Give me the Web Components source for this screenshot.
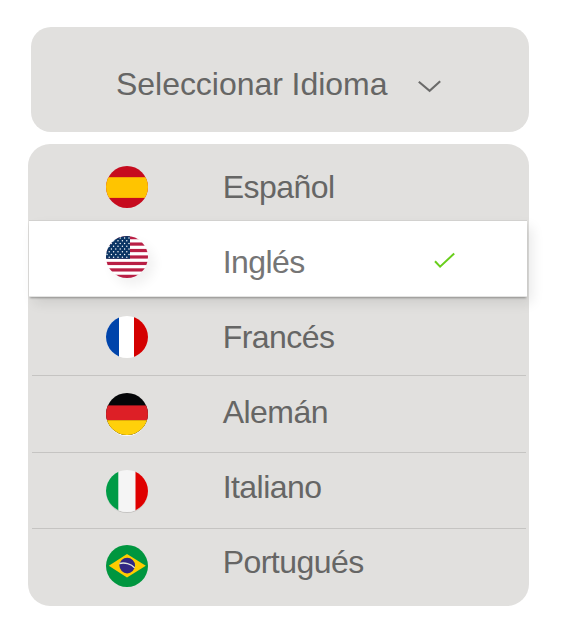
<!DOCTYPE html>
<html lang="es">
<head>
<meta charset="utf-8">
<title>Seleccionar Idioma</title>
<style>
    body {
        margin: 0;
        background: #fff;
        color: #666665;
        font-family: "Liberation Sans", Arial, sans-serif;
        font-size: 32px;
        line-height: 36px;
    }
</style>
</head>
<body>
<language-picker>
    <picker-header slot="header">Seleccionar Idioma</picker-header>
    <language-option flag="es" style="--height: 77px; --flag-top: 22px; --label-top: 25px">Español</language-option>
    <language-option flag="us" selected style="--height: 76px; --flag-top: 15.5px; --label-top: 23px">Inglés</language-option>
    <language-option flag="fr" style="--height: 78px; --flag-top: 19px; --label-top: 22px">Francés</language-option>
    <language-option flag="de" divided style="--height: 77px; --flag-top: 18px; --label-top: 19px">Alemán</language-option>
    <language-option flag="it" divided style="--height: 76px; --flag-top: 18.5px; --label-top: 17px">Italiano</language-option>
    <language-option flag="br" divided style="--height: 78px; --flag-top: 17px; --label-top: 16px">Portugués</language-option>
</language-picker>

<script>
// white stars of the US canton, in staggered rows
function stars() {
    let dots = '';
    for (let row = 0; row < 8; row++) {
        for (let col = 0; col < 6; col++) {
            const x = 1 + col * 4.4 + (row % 2) * 2.2;
            dots += `<circle cx="${x}" cy="${2 + row * 2.75}" r=".72"/>`;
        }
    }
    return `<g fill="#fff">${dots}</g>`;
}

function stripes() {
    let bars = '';
    for (let i = 0; i < 7; i++) {
        bars += `<rect y="${i * 6.46}" width="42" height="3.23"/>`;
    }
    return `<g fill="#b91f45">${bars}</g>`;
}

const flags = {
    es: `<rect width="42" height="42" fill="#c60b1e"/>
         <rect y="11.2" width="42" height="20.7" fill="#ffc400"/>`,
    us: `<rect width="42" height="42" fill="#fff"/>${stripes()}
         <rect width="24" height="22.8" fill="#0b3564"/>
         <g clip-path="url(#canton)">${stars()}</g>`,
    fr: `<rect width="42" height="42" fill="#fff"/>
         <rect width="13" height="42" fill="#0044aa"/>
         <rect x="28" width="14" height="42" fill="#d40000"/>`,
    de: `<rect width="42" height="42" fill="#050608"/>
         <rect y="12.4" width="42" height="15" fill="#dd1f26"/>
         <rect y="27.2" width="42" height="15" fill="#ffd00a"/>`,
    it: `<rect width="42" height="42" fill="#f5f5f5"/>
         <rect width="12.3" height="42" fill="#009b46"/>
         <rect x="29.5" width="13" height="42" fill="#df0000"/>`,
    br: `<rect width="42" height="42" fill="#00963f"/>
         <path d="M2.8 20.8 21 8.9l18.8 11.9L21 32.4z" fill="#ffcc00"/>
         <circle cx="21.2" cy="20.6" r="7.8" fill="#312783"/>
         <path d="M13.4 18.5c5-1.4 11.8.2 15.2 4.4" fill="none" stroke="#dfe5df" stroke-width="1.3"/>`
};

class FlagIcon extends HTMLElement {
    constructor() {
        super();
        this.attachShadow({ mode: 'open' });
    }

    connectedCallback() {
        const country = this.getAttribute('country');
        this.shadowRoot.innerHTML = `
        <style>
            :host { display: block; width: 42px; height: 42px; border-radius: 50%; }
            :host([country="us"]) { box-shadow: 6px 7px 12px rgba(0, 0, 0, .06); }
            :host([country="de"]) { box-shadow: 0 1px 0 rgba(255, 255, 255, .75); }
            :host([country="it"]) { box-shadow: 0 1px 0 rgba(0, 0, 0, .12); }
            svg { display: block; }
        </style>
        <svg width="42" height="42" viewBox="0 0 42 42">
            <clipPath id="disc"><circle cx="21" cy="21" r="21"/></clipPath>
            <clipPath id="canton"><rect width="24" height="22.8"/></clipPath>
            <g clip-path="url(#disc)">${flags[country] || ''}</g>
        </svg>`;
    }
}

class PickerHeader extends HTMLElement {
    constructor() {
        super();
        this.attachShadow({ mode: 'open' });
        this.shadowRoot.innerHTML = `
        <style>
            :host {
                display: flex;
                box-sizing: border-box;
                width: 498px;
                height: 104.5px;
                margin-left: 2.5px;
                padding: 38.7px 0 0 85.5px;
                border-radius: 20px;
                background: #e1e0de;
                letter-spacing: -.04px;
            }
            svg { margin: 14px 0 0 30.4px; }
        </style>
        <span><slot></slot></span>
        <svg width="24" height="14" viewBox="0 0 24 14" fill="none" stroke="#6b6b6a" stroke-width="2.1">
            <path d="M.8 1.8 11.6 10.9 22.2 1.3"/>
        </svg>`;
    }
}

class LanguageOption extends HTMLElement {
    constructor() {
        super();
        this.attachShadow({ mode: 'open' });
    }

    connectedCallback() {
        const check = this.hasAttribute('selected')
            ? `<svg width="22" height="18" viewBox="0 0 22 18" fill="none" stroke="#69ce1c" stroke-width="2">
                   <path d="M1 9.3 6.1 14.7 20.2 1.5"/>
               </svg>`
            : '';

        this.shadowRoot.innerHTML = `
        <style>
            :host {
                display: grid;
                grid-template-columns: 42px 212px 22px;
                align-items: start;
                box-sizing: border-box;
                height: var(--height);
                margin: 0 3px 0 4px;
                padding-left: 74px;
            }
            :host([divided]) {
                background: linear-gradient(#c5c4c2, #c5c4c2) top / 100% 1px no-repeat;
            }
            :host([selected]) {
                position: relative;
                margin: 0 2px 0 1px;
                padding-left: 77px;
                background: #fff;
                border-bottom: 1px solid #e4e4e3;
                box-shadow: 0 -1px 0 #d2d1cf, 0 2px 2px -1px rgba(0, 0, 0, .32), 5px 6px 12px rgba(0, 0, 0, .09);
            }
            flag-icon { margin-top: var(--flag-top); }
            .label { margin: var(--label-top) 0 0 74.7px; letter-spacing: -.55px; }
            :host([selected]) .label { color: #757575; }
            svg { margin: 31px 0 0 73.6px; }
        </style>
        <flag-icon country="${this.getAttribute('flag')}"></flag-icon>
        <span class="label"><slot></slot></span>
        ${check}`;
    }
}

class LanguagePicker extends HTMLElement {
    constructor() {
        super();
        this.attachShadow({ mode: 'open' });
        this.shadowRoot.innerHTML = `
        <style>
            :host {
                display: flex;
                flex-direction: column;
                gap: 12.2px;
                width: 501px;
                padding: 27.3px 0 0 28px;
            }
            .list {
                height: 462px;
                border-radius: 22px;
                background: #e1e0de;
            }
        </style>
        <slot name="header"></slot>
        <div class="list"><slot></slot></div>`;
    }
}

customElements.define('flag-icon', FlagIcon);
customElements.define('picker-header', PickerHeader);
customElements.define('language-option', LanguageOption);
customElements.define('language-picker', LanguagePicker);
</script>
</body>
</html>
